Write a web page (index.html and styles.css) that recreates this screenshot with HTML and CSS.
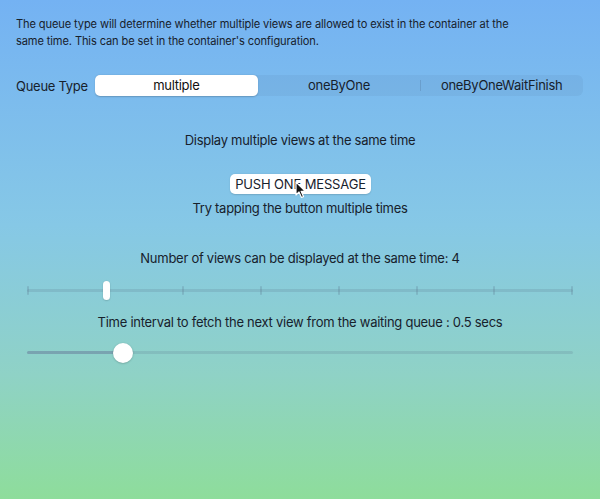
FILE: index.html
```html
<!DOCTYPE html>
<html>
<head>
<meta charset="utf-8">
<link rel="stylesheet" href="styles.css">
</head>
<body>
<main class="page">
  <p class="intro">The queue type will determine whether multiple views are allowed to exist in the container at the same time. This can be set in the container's configuration.</p>

  <div class="queue-row">
    <span class="queue-label">Queue Type</span>
    <div class="segmented">
      <div class="seg seg-active">multiple</div>
      <div class="seg">oneByOne</div>
      <div class="seg seg-divided">oneByOneWaitFinish</div>
    </div>
  </div>

  <p class="caption caption-display">Display multiple views at the same time</p>

  <div class="button-wrap">
    <button class="push-btn">PUSH ONE MESSAGE</button>
    <svg class="cursor" width="12" height="18" viewBox="0 0 12 18">
      <path d="M1 1 L1 14 L4 11 L6.5 16.5 L8.5 15.6 L6.1 10.3 L10.3 10.3 Z" fill="#111" stroke="#fff" stroke-width="1.2" stroke-linejoin="round"/>
    </svg>
  </div>

  <p class="caption caption-try">Try tapping the button multiple times</p>

  <p class="caption caption-number">Number of views can be displayed at the same time: 4</p>

  <div class="slider slider-ticks">
    <div class="track"></div>
    <div class="ticks">
      <span class="tick"></span><span class="tick"></span><span class="tick"></span><span class="tick"></span>
      <span class="tick"></span><span class="tick"></span><span class="tick"></span><span class="tick"></span>
    </div>
    <div class="thumb-bar" style="left: 76px"></div>
  </div>

  <p class="caption caption-time">Time interval to fetch the next view from the waiting queue : 0.5 secs</p>

  <div class="slider slider-round">
    <div class="track"></div>
    <div class="track-fill" style="width: 96px"></div>
    <div class="thumb-round" style="left: 86px"></div>
  </div>
</main>
</body>
</html>
```

FILE: styles.css
```css
* { box-sizing: border-box; }

html, body {
  margin: 0;
  padding: 0;
}

body {
  width: 600px;
  height: 499px;
  overflow: hidden;
  font-family: Inter, "Liberation Sans", sans-serif;
  font-size: 13px;
  letter-spacing: -0.27px;
  color: #17212c;
  background: linear-gradient(180deg, #74b2f3 0%, #86c8e6 45%, #8fd2c6 75%, #8edd9b 100%);
}

.page {
  padding: 16px 16px 0 16px;
  display: flex;
  flex-direction: column;
}

.intro {
  margin: 0;
  max-width: 505px;
  font-size: 11.1px;
  letter-spacing: -0.12px;
  line-height: 17px;
}

.queue-row {
  margin-top: 25px;
  display: flex;
  align-items: center;
  height: 21px;
}

.queue-label {
  width: 79px;
  flex: none;
}

.segmented {
  flex: none;
  width: 488px;
  height: 21px;
  display: flex;
  background: rgba(60, 80, 110, 0.07);
  border-radius: 6px;
}

.seg {
  flex: 1;
  display: flex;
  align-items: center;
  justify-content: center;
  line-height: 21px;
  position: relative;
}

.seg-active {
  background: #fff;
  border-radius: 5px;
  box-shadow: 0 0.5px 1.5px rgba(0, 0, 0, 0.2);
  color: #111;
}

.seg-divided::before {
  content: "";
  position: absolute;
  left: 0;
  top: 5px;
  bottom: 5px;
  width: 1px;
  background: rgba(60, 80, 110, 0.2);
}

.caption {
  margin: 0;
  text-align: center;
  line-height: 17px;
}

.caption-display { margin-top: 36px; }

.button-wrap {
  margin-top: 25px;
  display: flex;
  justify-content: center;
  position: relative;
  height: 20px;
}

.push-btn {
  font-family: inherit;
  font-size: 13px;
  letter-spacing: -0.15px;
  color: #17212c;
  background: #fff;
  border: none;
  border-radius: 5px;
  height: 20px;
  width: 141px;
  padding: 0;
  margin-left: 1px;
  box-shadow: 0 0.5px 1.5px rgba(0, 0, 0, 0.15);
}

.cursor {
  position: absolute;
  left: 279px;
  top: 7px;
}

.caption-try { margin-top: 6px; }
.caption-number { margin-top: 33px; }

.slider {
  position: relative;
  margin: 0 11px;
  height: 20px;
}

.slider-ticks { margin-top: 14px; }

.track {
  position: absolute;
  left: 0;
  right: 0;
  top: 8px;
  height: 3px;
  border-radius: 2px;
  background: rgba(90, 115, 140, 0.2);
}

.ticks {
  position: absolute;
  left: 0;
  right: 0;
  top: 5px;
  height: 9px;
  display: flex;
  justify-content: space-between;
}

.tick {
  width: 2px;
  height: 9px;
  background: rgba(90, 115, 140, 0.26);
  border-radius: 1px;
}

.thumb-bar {
  position: absolute;
  top: 0;
  width: 7px;
  height: 19px;
  background: #fff;
  border-radius: 4px;
  box-shadow: 0 0.5px 1.5px rgba(0, 0, 0, 0.25);
}

.caption-time { margin-top: 13px; }

.slider-round { margin-top: 12px; }

.track-fill {
  position: absolute;
  left: 0;
  top: 8px;
  height: 3px;
  border-radius: 2px;
  background: rgba(100, 110, 150, 0.32);
}

.thumb-round {
  position: absolute;
  top: 0;
  width: 20px;
  height: 20px;
  background: #fff;
  border-radius: 50%;
  box-shadow: 0 0.5px 2px rgba(0, 0, 0, 0.25);
}
```
